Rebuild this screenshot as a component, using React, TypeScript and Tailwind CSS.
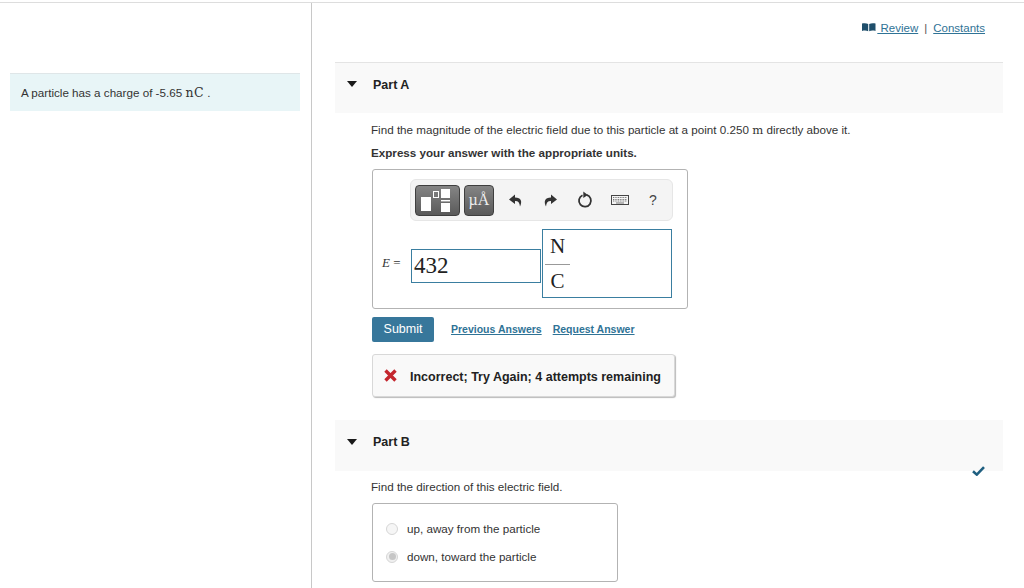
import React from "react";

const sans = { fontFamily: '"Liberation Sans", Arial, sans-serif' };
const serif = { fontFamily: '"Liberation Serif", serif' };

function Caret() {
  return (
    <svg width="10" height="6" viewBox="0 0 10 6" className="relative top-[-4px] shrink-0">
      <path d="M0 0H10L5 6Z" fill="#1a1a1a" />
    </svg>
  );
}

function PartBand({ title, check, border }: { title: string; check?: boolean; border?: boolean }) {
  return (
    <div className={border ? "relative flex h-[51px] items-center border-t border-[#e4e4e4] bg-[#f9f9f9] pl-[12px]" : "relative flex h-[51px] items-center bg-[#f9f9f9] pl-[12px]"}>
      <Caret />
      <span className="relative top-[-3px] ml-[16px] text-[12.5px] font-bold text-[#222]">{title}</span>
      {check && (
        <svg width="13" height="10" viewBox="0 0 13 10" className="absolute right-[18px] bottom-[-5px]">
          <path d="M1 5.2L4.8 8.6L12 1.2" fill="none" stroke="#1f5f80" strokeWidth="2.6" />
        </svg>
      )}
    </div>
  );
}

function Toolbar() {
  return (
    <div className="flex h-[42px] w-[263px] items-center rounded-[6px] border border-[#e6e6e6] bg-[#f4f4f4] pl-[4px]">
      <div className="flex h-[31px] w-[45px] items-center justify-center rounded-[4px] border border-[#3f3f3f] bg-gradient-to-b from-[#858585] to-[#5a5a5a]">
        <svg width="33" height="24" viewBox="0 0 33 24">
          <rect x="0" y="9" width="10" height="14" fill="#fff" />
          <rect x="12.5" y="3.5" width="5" height="6" fill="none" stroke="#fff" strokeWidth="1" />
          <rect x="20" y="1" width="9" height="9" fill="#fff" />
          <rect x="20" y="12" width="9" height="1.4" fill="#fff" />
          <rect x="20" y="15" width="9" height="9" fill="#fff" />
        </svg>
      </div>
      <div className="ml-[4px] flex h-[31px] w-[30px] items-center justify-center rounded-[4px] border border-[#3f3f3f] bg-gradient-to-b from-[#858585] to-[#5a5a5a] text-[16px] text-[#eee]" style={serif}>
        µÅ
      </div>
      <svg width="14" height="13" viewBox="0 0 14 12" className="ml-[15px]">
        <path d="M6 0L0 5L6 9.5V6.6C9 6.4 10.6 8 11 12C13.4 7 12.4 3.2 6 3Z" fill="#333" />
      </svg>
      <svg width="14" height="13" viewBox="0 0 14 12" className="ml-[20px]">
        <path d="M8 0L14 5L8 9.5V6.6C5 6.4 3.4 8 3 12C0.6 7 1.6 3.2 8 3Z" fill="#333" />
      </svg>
      <svg width="16" height="18" viewBox="0 0 16 18" className="ml-[20px]">
        <path d="M9.6 3.9A6 6 0 1 1 5.5 4.2" fill="none" stroke="#333" strokeWidth="1.8" />
        <path d="M6.3 0.4L10.8 3.9L6.3 7Z" fill="#333" />
      </svg>
      <svg width="18" height="10" viewBox="0 0 18 10" className="ml-[18px]">
        <rect x="0.5" y="0.5" width="17" height="9" fill="#f4f4f4" stroke="#444" />
        <path d="M2 2.5H16M2 4.5H16M2 6H16" stroke="#777" strokeWidth="1" strokeDasharray="1 0.7" />
        <path d="M5 8H13" stroke="#777" strokeWidth="1" />
      </svg>
      <span className="ml-[20px] text-[14px] text-[#444]">?</span>
    </div>
  );
}

export default function App() {
  return (
    <div className="flex h-[588px] w-[1024px] flex-col overflow-hidden bg-white text-[11.65px] text-[#333]" style={sans}>
      <div className="mt-[2px] h-px shrink-0 bg-[#dddddd]" />
      <div className="flex min-h-0 flex-1">
        <aside className="w-[312px] shrink-0 border-r border-[#c8c8c8] pl-[10px] pr-[11px] pt-[70px]">
          <div className="flex h-[38px] items-center border-t border-[#dfe6e8] bg-[#e8f5f7] pl-[11px] pt-[1px] text-[#333]">
            A particle has a charge of -5.65&nbsp;
            <span className="text-[12.5px] tracking-[0.5px]" style={{ fontFamily: '"DejaVu Serif", serif' }}>nC</span>
            &nbsp;.
          </div>
        </aside>
        <main className="min-w-0 flex-1 pl-[23px] pr-[21px]">
          <div className="flex h-[59px] items-start justify-end pt-[18px] pr-[18px] text-[11.5px] leading-[14px]">
            <svg width="14" height="9" viewBox="0 0 14 9" className="mt-[2px]">
              <path d="M0 0.5C2 0 4.5 0 6.2 1V8.2C4.5 7.4 2 7.4 0 8ZM7.2 1C9 0 11.5 0 13.5 0.5V8C11.5 7.4 9 7.4 7.2 8.2Z" fill="#1f4f6b" />
            </svg>
            <a className="ml-[1px] text-[#2f7396] underline">&nbsp;Review</a>
            <span className="mx-[6px] text-[#555]">|</span>
            <a className="text-[#2f7396] underline">Constants</a>
          </div>
          <PartBand title="Part A" border />
          <section className="pl-[36px]">
            <p className="mt-[10px] leading-[14px]">
              Find the magnitude of the electric field due to this particle at a point 0.250{" "}
              <span style={{ fontFamily: '"DejaVu Serif", serif' }}>m</span> directly above it.
            </p>
            <p className="mt-[9px] font-bold leading-[14px] text-[#333]">Express your answer with the appropriate units.</p>
            <div className="ml-[1px] mt-[9px] h-[140px] w-[316px] rounded-[3px] border border-[#b3b3b3] pt-[9px]">
              <div className="ml-[37px]"><Toolbar /></div>
              <div className="mt-[8px] flex items-start pl-[9px]">
                <span className="mt-[27px] w-[29px] text-[13px] leading-[14px] text-[#333]" style={serif}>
                  <i>E</i> =
                </span>
                <div className="mt-[20px] flex h-[34px] w-[130px] items-center border border-[#3a7ea0] pl-[2px] text-[23px] text-[#222]" style={serif}>432</div>
                <div className="ml-[1px] h-[69px] w-[130px] border border-[#3a7ea0] pl-[2px] pt-[3px] text-[21px] leading-[27px] text-[#222]" style={serif}>
                  <div className="flex w-[25px] flex-col items-center">
                    <span>N</span>
                    <span className="mb-[2px] mt-[4px] h-px w-[25px] bg-[#999]" />
                    <span className="leading-[28px]">C</span>
                  </div>
                </div>
              </div>
            </div>
            <div className="ml-[1px] mt-[8px] flex items-center">
              <button className="h-[25px] w-[62px] rounded-[2px] bg-[#37779b] text-[12.5px] text-white">Submit</button>
              <a className="ml-[17px] text-[10.5px] font-bold text-[#2f7396] underline">Previous Answers</a>
              <a className="ml-[11px] text-[10.5px] font-bold text-[#2f7396] underline">Request Answer</a>
            </div>
            <div className="ml-[1px] mt-[12px] flex h-[43px] w-[303px] items-center rounded-[3px] border border-[#d8d8d8] bg-[#f9f9f9] pl-[12px] pt-[3px] shadow-[1px_1px_1px_#bbb]">
              <svg width="13" height="13" viewBox="0 0 13 13" className="relative top-[-2px] left-[-1px]">
                <path d="M1.5 1.5L11.5 11.5M11.5 1.5L1.5 11.5" stroke="#c4262e" strokeWidth="3.4" />
              </svg>
              <span className="ml-[12px] text-[12.5px] font-bold text-[#222]">Incorrect; Try Again; 4 attempts remaining</span>
            </div>
          </section>
          <div className="mt-[23px]"><PartBand title="Part B" check /></div>
          <section className="pl-[36px]">
            <p className="mt-[9px] leading-[14px]">Find the direction of this electric field.</p>
            <div className="ml-[1px] mt-[9px] flex h-[79px] w-[246px] flex-col justify-center gap-[14px] rounded-[3px] border border-[#b3b3b3] pl-[13px]">
              <label className="flex h-[14px] items-center">
                <span className="h-[12px] w-[12px] rounded-full border border-[#d6d6d6] bg-[#f6f6f6]" />
                <span className="ml-[9px]">up, away from the particle</span>
              </label>
              <label className="flex h-[14px] items-center">
                <span className="flex h-[12px] w-[12px] items-center justify-center rounded-full border border-[#d6d6d6] bg-[#f0f0f0]">
                  <span className="h-[7px] w-[7px] rounded-full bg-[#c6c6c6]" />
                </span>
                <span className="ml-[9px]">down, toward the particle</span>
              </label>
            </div>
          </section>
        </main>
      </div>
    </div>
  );
}
